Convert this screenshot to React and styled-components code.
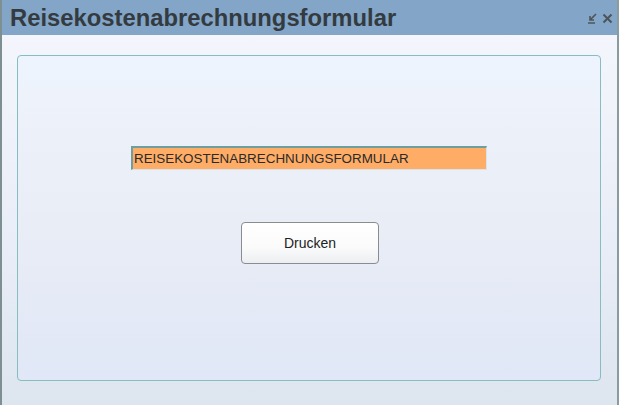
import styled, { createGlobalStyle } from "styled-components";

const Global = createGlobalStyle`
  html, body {
    margin: 0;
    padding: 0;
    font-family: "Liberation Sans", Arial, sans-serif;
  }
`;

const Window = styled.div`
  width: 619px;
  height: 405px;
  box-sizing: border-box;
  border-left: 2px solid #7d8f90;
  border-right: 2px solid #8a9c9e;
  display: flex;
  flex-direction: column;
  background: linear-gradient(#f6f7fd, #e9edf7 60%, #dde5ee);
`;

const TitleBar = styled.div`
  height: 35px;
  flex: 0 0 35px;
  background: #83a5c8;
  display: flex;
  align-items: center;
  justify-content: space-between;
  padding: 0 4px 0 8px;
`;

const Title = styled.h1`
  margin: 0;
  font-size: 23.8px;
  font-weight: bold;
  color: #333b40;
`;

const Tools = styled.div`
  display: flex;
  gap: 4px;
  align-items: center;
  margin-top: 2px;
`;

const Body = styled.div`
  flex: 1;
  padding: 20px 16px 24px 15px;
  display: flex;
`;

const Panel = styled.div`
  flex: 1;
  border: 1px solid #86bdc0;
  border-radius: 4px;
  background: linear-gradient(#eef4fd, #eaeef6 45%, #e0e7f6);
  display: flex;
  flex-direction: column;
  align-items: center;
  padding-top: 90px;
`;

const Field = styled.div`
  width: 356px;
  height: 24px;
  box-sizing: border-box;
  background: #ffad66;
  border-top: 2px solid #6f9e9e;
  border-left: 2px solid #6f9e9e;
  border-right: 1px solid #d8e4ea;
  border-bottom: 1px solid #d8e4ea;
  font-size: 13.4px;
  color: #2a2a2a;
  padding: 3px 0 0 1px;
  white-space: nowrap;
`;

const Button = styled.button`
  margin-top: 52px;
  margin-left: 2px;
  width: 138px;
  height: 42px;
  border: 1px solid #8a8d90;
  border-radius: 4px;
  background: linear-gradient(#ffffff, #fbfbfb 60%, #eceef1);
  font-family: "Liberation Sans", Arial, sans-serif;
  font-size: 14px;
  color: #222;
`;

const Icon = styled.svg`
  display: block;
`;

export default function App() {
  return (
    <>
      <Global />
      <Window>
        <TitleBar>
          <Title>Reisekostenabrechnungsformular</Title>
          <Tools>
            <Icon width="11" height="11" viewBox="0 0 11 11">
              <path d="M9 1 L3 7 M3 3 L3 7 L7 7 M1 10 L8 10" stroke="#4d5558" strokeWidth="1.6" fill="none" />
            </Icon>
            <Icon width="11" height="11" viewBox="0 0 11 11">
              <path d="M1.5 1.5 L9.5 9.5 M9.5 1.5 L1.5 9.5" stroke="#4d5558" strokeWidth="2" fill="none" />
            </Icon>
          </Tools>
        </TitleBar>
        <Body>
          <Panel>
            <Field>REISEKOSTENABRECHNUNGSFORMULAR</Field>
            <Button>Drucken</Button>
          </Panel>
        </Body>
      </Window>
    </>
  );
}
